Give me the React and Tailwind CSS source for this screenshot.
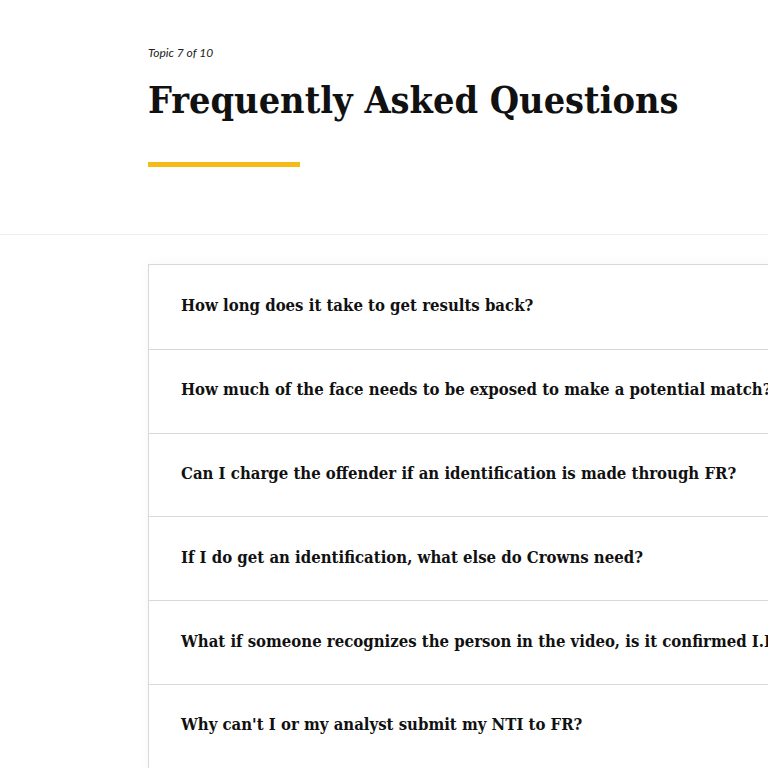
import React from 'react';

const questions = [
  "How long does it take to get results back?",
  "How much of the face needs to be exposed to make a potential match?",
  "Can I charge the offender if an identification is made through FR?",
  "If I do get an identification, what else do Crowns need?",
  "What if someone recognizes the person in the video, is it confirmed I.D.?",
  "Why can't I or my analyst submit my NTI to FR?",
];

const serif = { fontFamily: '"DejaVu Serif Condensed", "DejaVu Serif", "Liberation Serif", serif' };

const App = () => {
  return (
    <div className="w-[768px] h-[768px] overflow-hidden bg-white">
      {/* HEADER */}
      <div className="pl-[148px] pt-[46px] pb-[67px] border-b border-[#ececec]">
        <p className="text-[12px] italic text-[#222] leading-[14px] font-['Lato',sans-serif]">Topic 7 of 10</p>
        <h1 className="mt-[15px] text-[37.5px] leading-[50px] font-bold text-[#111] whitespace-nowrap" style={serif}>
          Frequently Asked Questions
        </h1>
        <div className="mt-[37px] w-[152px] h-[5px] bg-[#f6bb16]"></div>
      </div>

      {/* FAQ LIST */}
      <div className="pl-[148px] pt-[29px]">
        <div className="w-[900px] border border-[#d8d8d8] bg-white shadow-[0_0_12px_rgba(0,0,0,0.04)]">
          {questions.map((q, i) => (
            <div key={i} className={`h-[83.8px] flex items-center pl-[32px] pb-[3px] ${i > 0 ? 'border-t border-[#d8d8d8]' : ''}`}>
              <span className="text-[16.6px] font-bold text-[#111] whitespace-nowrap" style={serif}>{q}</span>
            </div>
          ))}
        </div>
      </div>
    </div>
  );
};

export default App;
